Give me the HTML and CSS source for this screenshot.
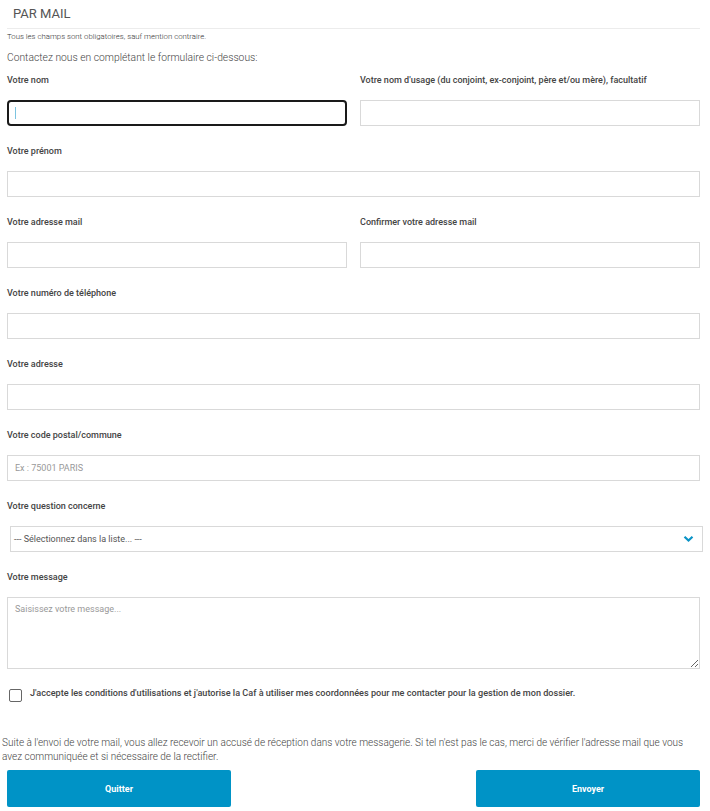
FILE: index.html
```html
<!DOCTYPE html>
<html lang="fr">
<head>
  <meta charset="UTF-8" />
  <title>Contact par mail</title>
  <link rel="stylesheet" href="styles.css">
</head>
<body>
  <div class="page">
    <h2 class="title">PAR MAIL</h2>
    <p class="note">Tous les champs sont obligatoires, sauf mention contraire.</p>
    <p class="intro">Contactez nous en complétant le formulaire ci-dessous:</p>

    <form class="form">
      <div class="row two">
        <div class="field">
          <label for="nom">Votre nom</label>
          <div class="input-wrap">
            <input type="text" id="nom" class="focused" />
            <span class="caret"></span>
          </div>
        </div>
        <div class="field">
          <label for="usage">Votre nom d'usage (du conjoint, ex-conjoint, père et/ou mère), facultatif</label>
          <input type="text" id="usage" />
        </div>
      </div>

      <div class="row">
        <div class="field">
          <label for="prenom">Votre prénom</label>
          <input type="text" id="prenom" />
        </div>
      </div>

      <div class="row two">
        <div class="field">
          <label for="mail">Votre adresse mail</label>
          <input type="email" id="mail" />
        </div>
        <div class="field">
          <label for="mail2">Confirmer votre adresse mail</label>
          <input type="email" id="mail2" />
        </div>
      </div>

      <div class="row">
        <div class="field">
          <label for="tel">Votre numéro de téléphone</label>
          <input type="tel" id="tel" />
        </div>
      </div>

      <div class="row">
        <div class="field">
          <label for="adresse">Votre adresse</label>
          <input type="text" id="adresse" />
        </div>
      </div>

      <div class="row">
        <div class="field">
          <label for="cp">Votre code postal/commune</label>
          <input type="text" id="cp" placeholder="Ex : 75001 PARIS" />
        </div>
      </div>

      <div class="row">
        <div class="field">
          <label for="question">Votre question concerne</label>
          <div class="select">
            <span>--- Sélectionnez dans la liste... ---</span>
            <svg width="11" height="8" viewBox="0 0 11 8"><path d="M1.5 1.8 L5.5 5.6 L9.5 1.8" fill="none" stroke="#0a93c6" stroke-width="2.2"/></svg>
          </div>
        </div>
      </div>

      <div class="row">
        <div class="field">
          <label for="message">Votre message</label>
          <textarea id="message" placeholder="Saisissez votre message..."></textarea>
        </div>
      </div>

      <label class="check">
        <span class="box"></span>
        <span>J'accepte les conditions d'utilisations et j'autorise la Caf à utiliser mes coordonnées pour me contacter pour la gestion de mon dossier.</span>
      </label>

      <p class="info">Suite à l'envoi de votre mail, vous allez recevoir un accusé de réception dans votre messagerie. Si tel n'est pas le cas, merci de vérifier l'adresse mail que vous avez communiquée et si nécessaire de la rectifier.</p>

      <div class="actions">
        <button type="button" class="btn">Quitter</button>
        <button type="button" class="btn">Envoyer</button>
      </div>
    </form>
  </div>
</body>
</html>
```

FILE: styles.css
```css
body { margin: 0; font-family: Roboto, "Liberation Sans", sans-serif; color: #444; background: #fff; }
.page { padding: 0 10px 0 7px; }
.title { margin: 0; padding: 6px 6px 0; height: 22px; font-size: 13px; font-weight: 400; color: #555; border-bottom: 1px solid #ececec; }
.note { margin: 3px 0 0; font-size: 7.8px; line-height: 10px; font-weight: 300; color: #333; }
.intro { margin: 9px 0 0; font-size: 10.3px; line-height: 14px; font-weight: 300; color: #444; }

.form { margin-top: 9px; }
.row { margin-bottom: 19px; }
.row.two { display: grid; grid-template-columns: 1fr 1fr; gap: 13px; }
.field label { display: block; font-size: 9px; line-height: 12px; font-weight: 500; color: #444; margin-bottom: 14px; white-space: nowrap; }

input, textarea { display: block; box-sizing: border-box; width: 100%; height: 26px; margin: 0; padding: 0 7px; border: 1px solid #d9d9d9; border-radius: 0; font-family: inherit; font-size: 9px; color: #444; background: #fff; outline: none; }
input::placeholder, textarea::placeholder { color: #999; }
input.focused { border: 2px solid #1a1a1a; border-radius: 4px; }
.input-wrap { position: relative; }
.caret { position: absolute; left: 8px; top: 7px; width: 1px; height: 12px; background: #7cc4e0; }

.select { display: flex; align-items: center; justify-content: space-between; box-sizing: border-box; height: 26px; margin: 0 -3px 0 3px; padding: 0 8px 0 3px; border: 1px solid #d9d9d9; font-size: 9px; color: #555; }

textarea { height: 72px; padding: 6px 7px; resize: vertical; }

.check { display: flex; align-items: flex-start; gap: 8px; margin: 19px 0 0 2px; font-size: 9.1px; line-height: 11px; font-weight: 500; color: #444; }
.check .box { flex: none; width: 11px; height: 11px; margin-top: 1px; border: 1.5px solid #666; border-radius: 2px; }

.info { margin: 34px -3px 0 -5px; font-size: 10px; line-height: 14px; font-weight: 300; color: #444; }

.actions { display: flex; justify-content: space-between; margin-top: 6px; }
.btn { width: 224px; height: 37px; border: 0; border-radius: 2px; background: #0093c6; color: #fff; font-family: inherit; font-size: 9px; font-weight: 700; }
```
